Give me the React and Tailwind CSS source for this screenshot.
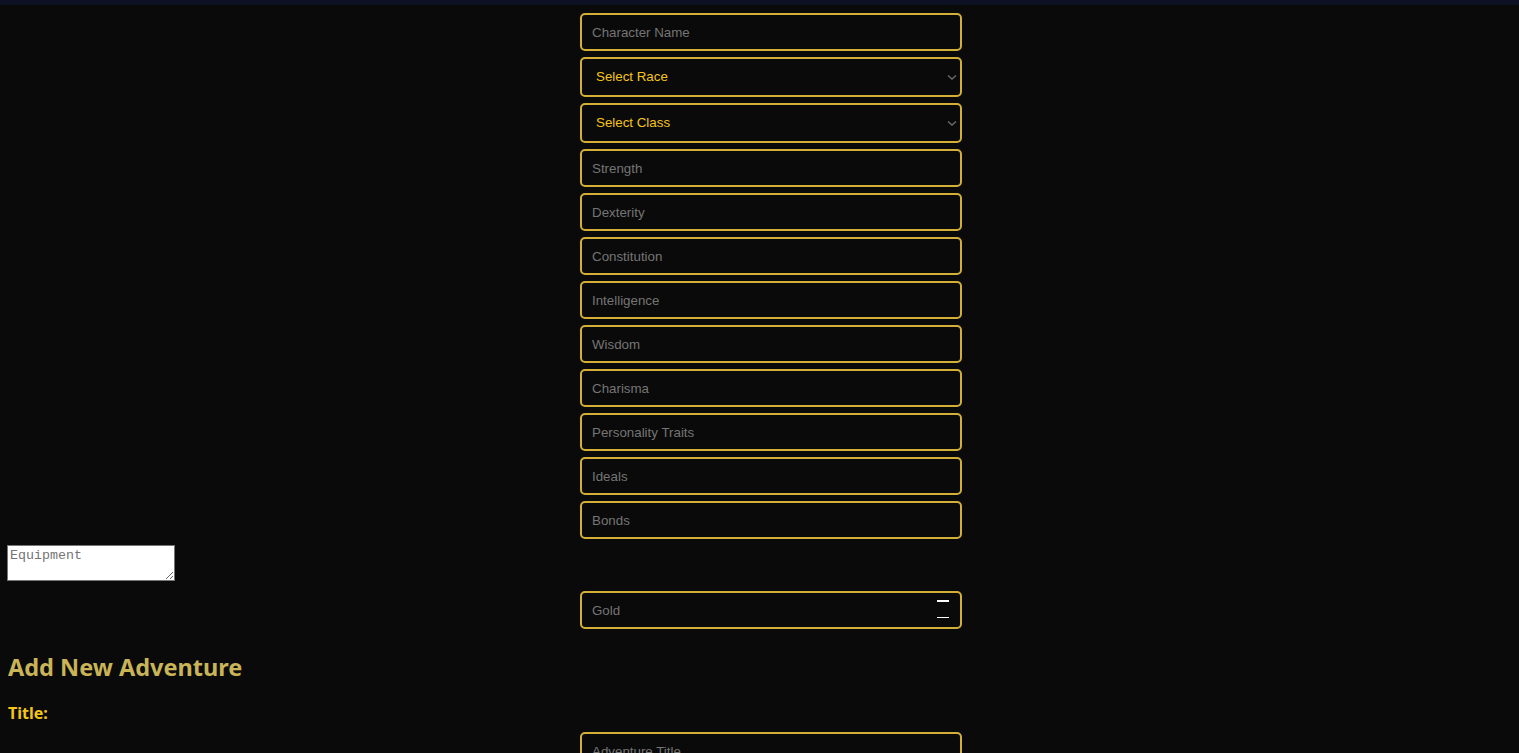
import React from "react";

const fields = ["Strength","Dexterity","Constitution","Intelligence","Wisdom","Charisma","Personality Traits","Ideals","Bonds"];

const inputCls = "block w-[382px] h-[38px] ml-[572px] mb-[6px] border-2 border-[#d4af37] rounded-[5px] bg-[#0a0a0a] px-[10px] text-[13.333px] text-[#e5e5e5] placeholder:text-[#757575] outline-none font-['Liberation_Sans',Arial,sans-serif]";

function Select({ label }) {
  return (
    <div className="relative w-[382px] h-[40px] ml-[572px] mb-[6px] border-2 border-[#d4af37] rounded-[5px] bg-[#0a0a0a] flex items-center pl-[14px] font-['Liberation_Sans',Arial,sans-serif]">
      <span className="text-[13.333px] text-[#f5c518]">{label}</span>
      <svg className="absolute right-[3px] top-[15px]" width="10" height="7" viewBox="0 0 10 7">
        <path d="M1 1.5 L5 5 L9 1.5" fill="none" stroke="#6b6b6b" strokeWidth="1.4" />
      </svg>
    </div>
  );
}

export default function App() {
  return (
    <div className="min-h-screen bg-[#0a0a0a]">
      <div className="h-[5px] bg-[#0d1124]" />
      <div className="px-2 pt-2">
        <input className={inputCls} placeholder="Character Name" />
        <Select label="Select Race" />
        <Select label="Select Class" />
        {fields.map((f) => (
          <input key={f} className={inputCls} placeholder={f} />
        ))}
        <textarea
          placeholder="Equipment"
          className="block -ml-px w-[168px] h-[36px] bg-white border border-[#767676] px-[2px] pt-[2px] text-[13.333px] leading-[16px] placeholder:text-[#757575] font-['Liberation_Mono','DejaVu_Sans_Mono',monospace] resize-y"
        />
        <div className="relative mt-[10px]">
          <input className={inputCls + " mb-0"} placeholder="Gold" />
          <div className="absolute left-[929px] top-[9px] w-[12px] h-[2px] bg-white" />
          <div className="absolute left-[929px] top-[26px] w-[12px] h-px bg-white" />
        </div>
        <h2 className="mt-[22px] text-[23.5px] leading-[32px] font-bold text-[#c9b458] font-['Comic_Sans_MS','Noto_Sans',cursive]">
          Add New Adventure
        </h2>
        <div className="mt-[20px] text-[16px] leading-[20px] font-bold text-[#f5c518] font-['Comic_Sans_MS','Noto_Sans',cursive]">
          Title:
        </div>
        <input className={inputCls + " mt-[9px]"} placeholder="Adventure Title" />
      </div>
    </div>
  );
}
